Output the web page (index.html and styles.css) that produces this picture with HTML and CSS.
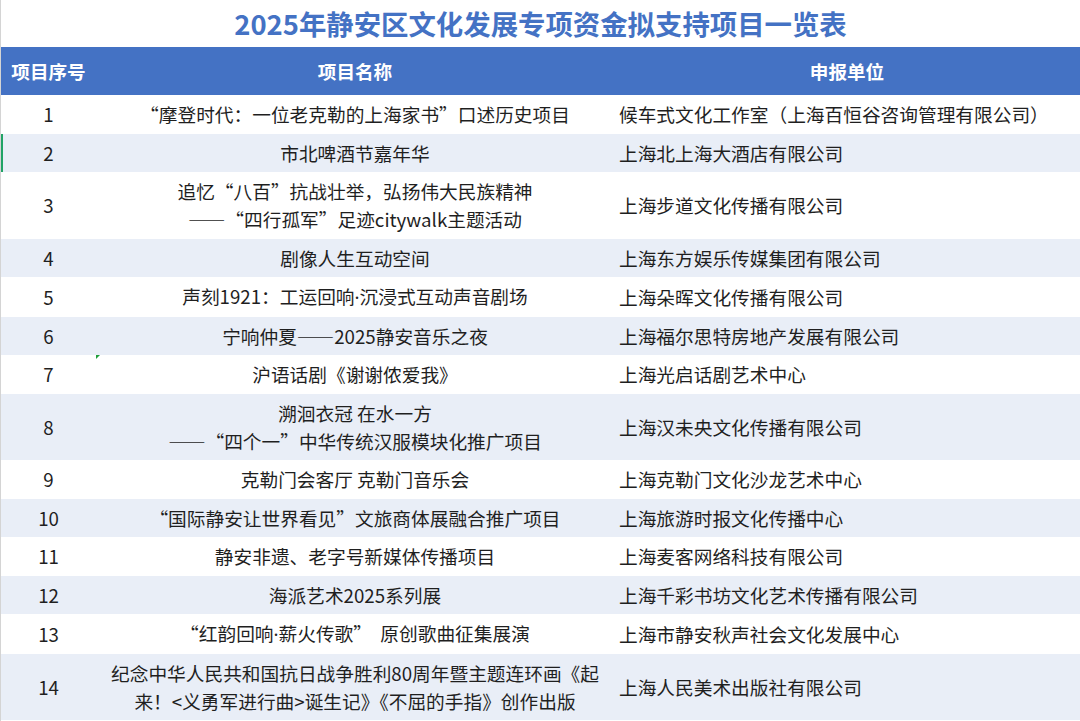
FILE: index.html
```html
<!DOCTYPE html>
<html lang="zh-CN">
<head>
<meta charset="utf-8">
<title>2025年静安区文化发展专项资金拟支持项目一览表</title>
<link rel="stylesheet" href="styles.css">
</head>
<body>
<div class="sheet">
  <h1 class="title">2025年静安区文化发展专项资金拟支持项目一览表</h1>
  <table class="list">
    <colgroup>
      <col class="c-no">
      <col class="c-name">
      <col class="c-unit">
    </colgroup>
    <thead>
      <tr>
        <th>项目序号</th>
        <th>项目名称</th>
        <th>申报单位</th>
      </tr>
    </thead>
    <tbody>
      <tr><td class="no">1</td><td class="name">“摩登时代：一位老克勒的上海家书”口述历史项目</td><td class="unit">候车式文化工作室（上海百恒谷咨询管理有限公司）</td></tr>
      <tr class="alt"><td class="no selected">2</td><td class="name">市北啤酒节嘉年华</td><td class="unit">上海北上海大酒店有限公司</td></tr>
      <tr><td class="no">3</td><td class="name">追忆“八百”抗战壮举，弘扬伟大民族精神<br>——“四行孤军”足迹citywalk主题活动</td><td class="unit">上海步道文化传播有限公司</td></tr>
      <tr class="alt"><td class="no">4</td><td class="name">剧像人生互动空间</td><td class="unit">上海东方娱乐传媒集团有限公司</td></tr>
      <tr><td class="no">5</td><td class="name">声刻1921：工运回响<span class="dot">·</span>沉浸式互动声音剧场</td><td class="unit">上海朵晖文化传播有限公司</td></tr>
      <tr class="alt"><td class="no">6</td><td class="name">宁响仲夏——2025静安音乐之夜</td><td class="unit">上海福尔思特房地产发展有限公司</td></tr>
      <tr><td class="no">7</td><td class="name marked">沪语话剧《谢谢侬爱我》</td><td class="unit">上海光启话剧艺术中心</td></tr>
      <tr class="alt"><td class="no">8</td><td class="name">溯洄衣冠 在水一方<br>——“四个一”中华传统汉服模块化推广项目</td><td class="unit">上海汉未央文化传播有限公司</td></tr>
      <tr><td class="no">9</td><td class="name">克勒门会客厅 克勒门音乐会</td><td class="unit">上海克勒门文化沙龙艺术中心</td></tr>
      <tr class="alt"><td class="no">10</td><td class="name">“国际静安让世界看见”文旅商体展融合推广项目</td><td class="unit">上海旅游时报文化传播中心</td></tr>
      <tr><td class="no">11</td><td class="name">静安非遗、老字号新媒体传播项目</td><td class="unit">上海麦客网络科技有限公司</td></tr>
      <tr class="alt"><td class="no">12</td><td class="name">海派艺术2025系列展</td><td class="unit">上海千彩书坊文化艺术传播有限公司</td></tr>
      <tr><td class="no">13</td><td class="name">“红韵回响<span class="dot">·</span>薪火传歌”&nbsp; 原创歌曲征集展演</td><td class="unit">上海市静安秋声社会文化发展中心</td></tr>
      <tr class="alt"><td class="no">14</td><td class="name">纪念中华人民共和国抗日战争胜利80周年暨主题连环画《起<br>来！&lt;义勇军进行曲&gt;诞生记》《不屈的手指》创作出版</td><td class="unit">上海人民美术出版社有限公司</td></tr>
    </tbody>
  </table>
</div>
</body>
</html>
```

FILE: styles.css
```css
html, body {
  margin: 0;
  padding: 0;
  background: #ffffff;
}

body {
  font-family: "Noto Sans CJK SC", "Noto Sans", sans-serif;
  color: #1f1f1f;
  overflow: hidden;
}

.sheet {
  width: 1080px;
  height: 721px;
  box-sizing: border-box;
  border-left: 1px solid #d4d4d4;
}

.title {
  margin: 0;
  height: 47px;
  line-height: 46px;
  font-size: 27.4px;
  font-weight: 700;
  color: #4472c4;
  text-align: center;
}

.list {
  width: 1079px;
  border-collapse: collapse;
  table-layout: fixed;
  font-size: 18.7px;
}

.c-no { width: 95px; }
.c-name { width: 518px; }
.c-unit { width: 466px; }

.list th {
  background: #4472c4;
  color: #ffffff;
  font-weight: 700;
  font-size: 18.6px;
  height: 48px;
  padding: 0;
  text-align: center;
  line-height: 48px;
}

.list td {
  padding: 5.25px 0;
  line-height: 28px;
  vertical-align: middle;
  white-space: nowrap;
}

.list tr.alt td {
  background: #e9eef7;
}

.list td.no {
  text-align: center;
}

.list td.name {
  text-align: center;
}

.list td.unit {
  text-align: left;
  padding-left: 5px;
}

.dot {
  font-family: "Noto Sans", sans-serif;
}

.list td.selected {
  box-shadow: inset 2px 0 0 #21a366;
}

.list td.marked {
  position: relative;
}

.list td.marked::before {
  content: "";
  position: absolute;
  left: 0;
  top: 0;
  width: 0;
  height: 0;
  border-top: 4px solid #1e9e3a;
  border-right: 4px solid transparent;
}
```
